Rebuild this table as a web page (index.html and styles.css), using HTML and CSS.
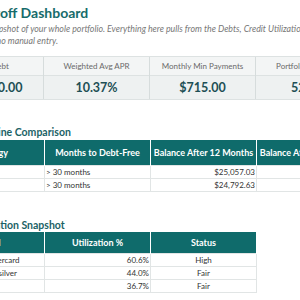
FILE: index.html
```html
<!DOCTYPE html>
<html>
<head>
<meta charset="utf-8">
<link rel="stylesheet" href="styles.css">
</head>
<body>
<div class="page">
  <h1 class="title">Debt Payoff Dashboard</h1>
  <p class="subtitle">Here is a live snapshot of your whole portfolio. Everything here pulls from the Debts, Credit Utilization, and Payments<br>tabs, so there is no manual entry.</p>

  <div class="kpis">
    <div class="kpi"><div class="kpi-label">Total Debt</div><div class="kpi-value">$27,340.00</div></div>
    <div class="kpi"><div class="kpi-label">Weighted Avg APR</div><div class="kpi-value">10.37%</div></div>
    <div class="kpi"><div class="kpi-label">Monthly Min Payments</div><div class="kpi-value">$715.00</div></div>
    <div class="kpi"><div class="kpi-label">Portfolio Util. Rate</div><div class="kpi-value">52.1%</div></div>
  </div>

  <h2 class="section first">Strategy Timeline Comparison</h2>
  <table class="grid wide">
    <colgroup><col class="c"><col class="c"><col class="c"><col class="c"><col class="c"></colgroup>
    <thead>
      <tr><th>Strategy</th><th>Months to Debt-Free</th><th>Balance After 12 Months</th><th>Balance After 24 Months</th><th>Total Interest</th></tr>
    </thead>
    <tbody>
      <tr><td>Avalanche</td><td>&gt; 30 months</td><td class="num">$25,057.03</td><td class="num">$22,410.18</td><td class="num">$6,120.44</td></tr>
      <tr><td>Snowball</td><td>&gt; 30 months</td><td class="num">$24,792.63</td><td class="num">$22,115.90</td><td class="num">$6,388.21</td></tr>
    </tbody>
  </table>

  <h2 class="section second">Credit Utilization Snapshot</h2>
  <table class="grid narrow">
    <colgroup><col class="c"><col class="c"><col class="c"></colgroup>
    <thead>
      <tr><th>Card</th><th>Utilization %</th><th>Status</th></tr>
    </thead>
    <tbody>
      <tr><td>Navy Fed Mastercard</td><td class="num">60.6%</td><td class="ctr">High</td></tr>
      <tr><td>Cap One Quicksilver</td><td class="num">44.0%</td><td class="ctr">Fair</td></tr>
      <tr><td>Discover</td><td class="num">36.7%</td><td class="ctr">Fair</td></tr>
    </tbody>
  </table>
</div>
</body>
</html>
```
FILE: styles.css
```css
html, body {
  margin: 0;
  padding: 0;
  background: #ffffff;
  overflow: hidden;
}
body {
  font-family: Lato, "Noto Sans", sans-serif;
  color: #333333;
}
.page {
  margin-left: -62px;
  width: 560px;
  padding-top: 4px;
}
.title {
  margin: 0 0 0 5px;
  font-size: 14px;
  line-height: 18px;
  font-weight: 700;
  color: #176b6b;
  white-space: nowrap;
}
.subtitle {
  margin: 1px 0 0 0;
  font-size: 8.8px;
  line-height: 11.5px;
  font-style: italic;
  color: #777777;
  white-space: nowrap;
}
.kpis {
  margin-top: 10px;
  display: grid;
  grid-template-columns: repeat(4, 106px);
  background: #eef1f1;
  border-top: 1px solid #dde2e2;
  border-bottom: 1px solid #dde2e2;
}
.kpi {
  border-right: 1px solid #d6dcdc;
  text-align: center;
}
.kpi-label {
  height: 18px;
  line-height: 18px;
  font-size: 8px;
  color: #6a6a6a;
  background: #f3f5f5;
  border-bottom: 1px solid #dde2e2;
  white-space: nowrap;
}
.kpi-value {
  height: 23px;
  line-height: 23px;
  font-size: 12.5px;
  font-weight: 700;
  color: #1d4f55;
  white-space: nowrap;
}
.section {
  margin: 26px 0 0 0;
  font-size: 10.5px;
  line-height: 12px;
  font-weight: 700;
  color: #1b6266;
  white-space: nowrap;
}
.section.first {
  margin-left: -7px;
}
.section.second {
  margin-top: 27px;
  margin-left: 1px;
}
.grid {
  border-collapse: collapse;
  table-layout: fixed;
  margin-top: 2px;
  font-size: 8px;
}
.section.second + .grid { margin-top: 1px; }
.grid.wide { width: 530px; }
.grid.narrow { width: 319px; }
.grid col.c { width: 106px; }
.grid th {
  background: #0f6b6b;
  color: #ffffff;
  font-weight: 700;
  font-size: 9px;
  height: 25px;
  padding: 0 2px;
  text-align: center;
  white-space: nowrap;
  overflow: hidden;
  border-right: 1px solid rgba(255, 255, 255, 0.45);
  box-sizing: border-box;
}
.grid.narrow th { height: 22px; }
.grid td {
  height: 12px;
  line-height: 12px;
  padding: 0 1px;
  border: 1px solid #e1e5e5;
  white-space: nowrap;
  overflow: hidden;
  color: #333333;
}
.grid td:first-child { padding-left: 6px; }
.grid td.num { text-align: right; }
.grid td.ctr { text-align: center; }
```
